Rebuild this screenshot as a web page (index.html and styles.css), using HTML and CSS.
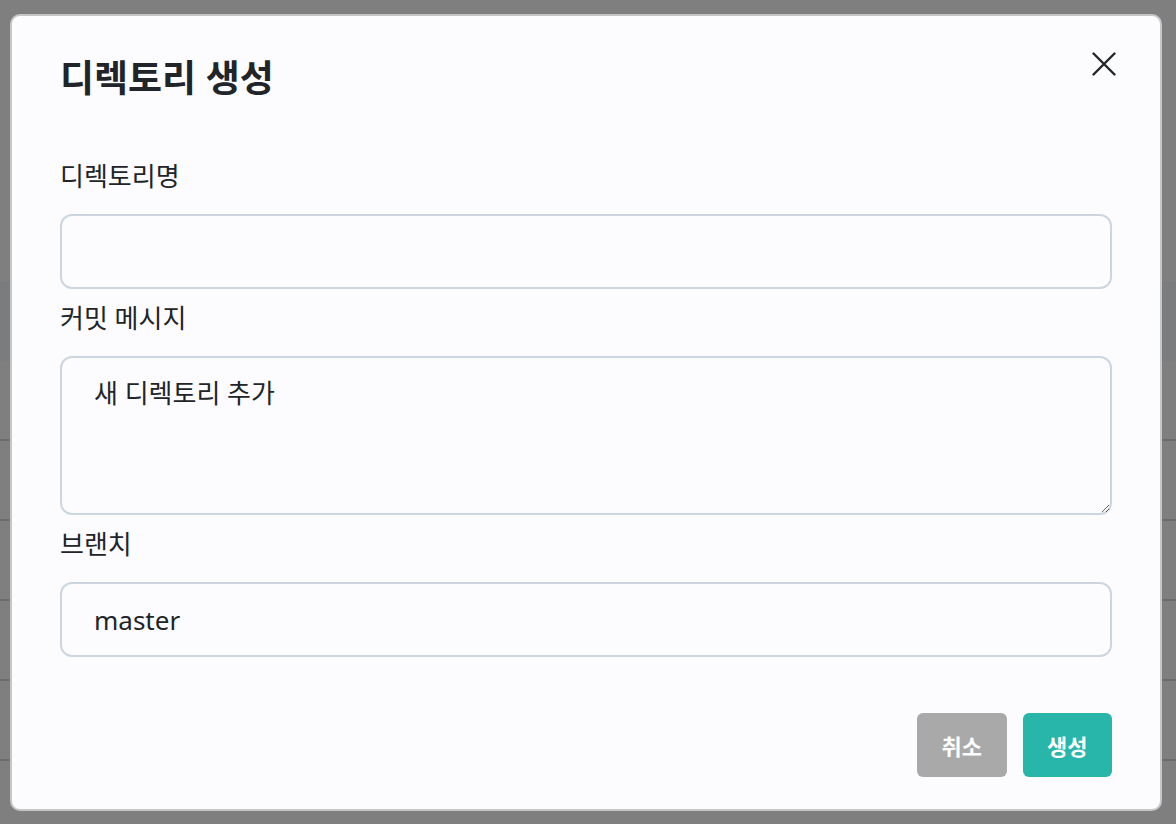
FILE: index.html
```html
<!DOCTYPE html>
<html lang="ko">
<head>
<meta charset="utf-8">
<title>디렉토리 생성</title>
<link rel="stylesheet" href="styles.css">
</head>
<body>
<div class="page">
  <div class="page-top"></div>
  <div class="page-band"></div>
  <div class="page-row"></div>
  <div class="page-row"></div>
  <div class="page-row"></div>
  <div class="page-row"></div>
  <div class="page-row"></div>
</div>
<div class="overlay">
  <div class="modal">
    <div class="modal-header">
      <h2 class="modal-title">디렉토리 생성</h2>
      <button class="close-btn" type="button" aria-label="닫기">
        <svg width="24" height="24" viewBox="0 0 24 24"><path d="M1.5 1.5L22.5 22.5M22.5 1.5L1.5 22.5" stroke="#22262b" stroke-width="2.4" stroke-linecap="round" fill="none"/></svg>
      </button>
    </div>
    <form class="modal-body">
      <label class="field-label">디렉토리명</label>
      <input class="field-input" type="text">
      <label class="field-label">커밋 메시지</label>
      <textarea class="field-input field-textarea">새 디렉토리 추가</textarea>
      <label class="field-label">브랜치</label>
      <input class="field-input" type="text" value="master">
    </form>
    <div class="modal-footer">
      <button class="btn btn-cancel" type="button">취소</button>
      <button class="btn btn-create" type="button">생성</button>
    </div>
  </div>
</div>
</body>
</html>
```
FILE: styles.css
```css
html, body {
  margin: 0;
  padding: 0;
  height: 100%;
  overflow: hidden;
}
body {
  font-family: "Noto Sans", "Noto Sans CJK KR", sans-serif;
  color: #212529;
  background: #ffffff;
}
.page {
  display: flex;
  flex-direction: column;
}
.page-top {
  height: 281px;
}
.page-band {
  height: 80px;
  background: #f5f8fd;
}
.page-row {
  height: 78px;
  border-bottom: 2px solid #d8d8d8;
}
.overlay {
  position: fixed;
  inset: 0;
  background: rgba(0, 0, 0, 0.5);
  padding: 14px 14px 13px 10px;
  box-sizing: border-box;
  display: flex;
}
.modal {
  box-sizing: border-box;
  width: 1152px;
  height: 797px;
  background: #fcfcfe;
  border: 2px solid #c6c6c6;
  border-radius: 10px;
  padding: 39px 48px 32px 48px;
  display: flex;
  flex-direction: column;
}
.modal-header {
  display: flex;
  justify-content: space-between;
  align-items: flex-start;
}
.modal-title {
  margin: 0;
  font-size: 37px;
  line-height: 46px;
  font-weight: 700;
  color: #212529;
}
.close-btn {
  border: 0;
  background: transparent;
  padding: 0;
  width: 24px;
  height: 24px;
  margin-top: -3px;
  margin-right: -4px;
  cursor: pointer;
  display: flex;
}
.modal-body {
  margin-top: 56px;
  display: flex;
  flex-direction: column;
}
.field-label {
  display: block;
  font-size: 26px;
  line-height: 38px;
  margin-bottom: 19px;
  color: #212529;
}
.field-label + .field-input {
  margin-bottom: 10px;
}
.field-input {
  box-sizing: border-box;
  width: 100%;
  height: 75px;
  border: 2px solid #ccd6e0;
  border-radius: 12px;
  background: #fcfcfe;
  font-family: "Noto Sans", "Noto Sans CJK KR", sans-serif;
  font-size: 26px;
  color: #212529;
  padding: 0 30px 0 32px;
  outline: none;
}
.field-textarea {
  height: 159px;
  padding-top: 16px;
  line-height: 1.5;
  resize: vertical;
}
.modal-body .field-input:last-child {
  margin-bottom: 0;
}
.modal-footer {
  margin-top: 56px;
  display: flex;
  justify-content: flex-end;
  gap: 16px;
}
.btn {
  border: 0;
  border-radius: 6px;
  height: 64px;
  padding: 0 24.5px;
  font-family: "Noto Sans", "Noto Sans CJK KR", sans-serif;
  font-size: 22px;
  font-weight: 700;
  color: #ffffff;
  cursor: pointer;
}
.btn-cancel {
  background: #a9a9a9;
}
.btn-create {
  background: #27b6a9;
}
```
